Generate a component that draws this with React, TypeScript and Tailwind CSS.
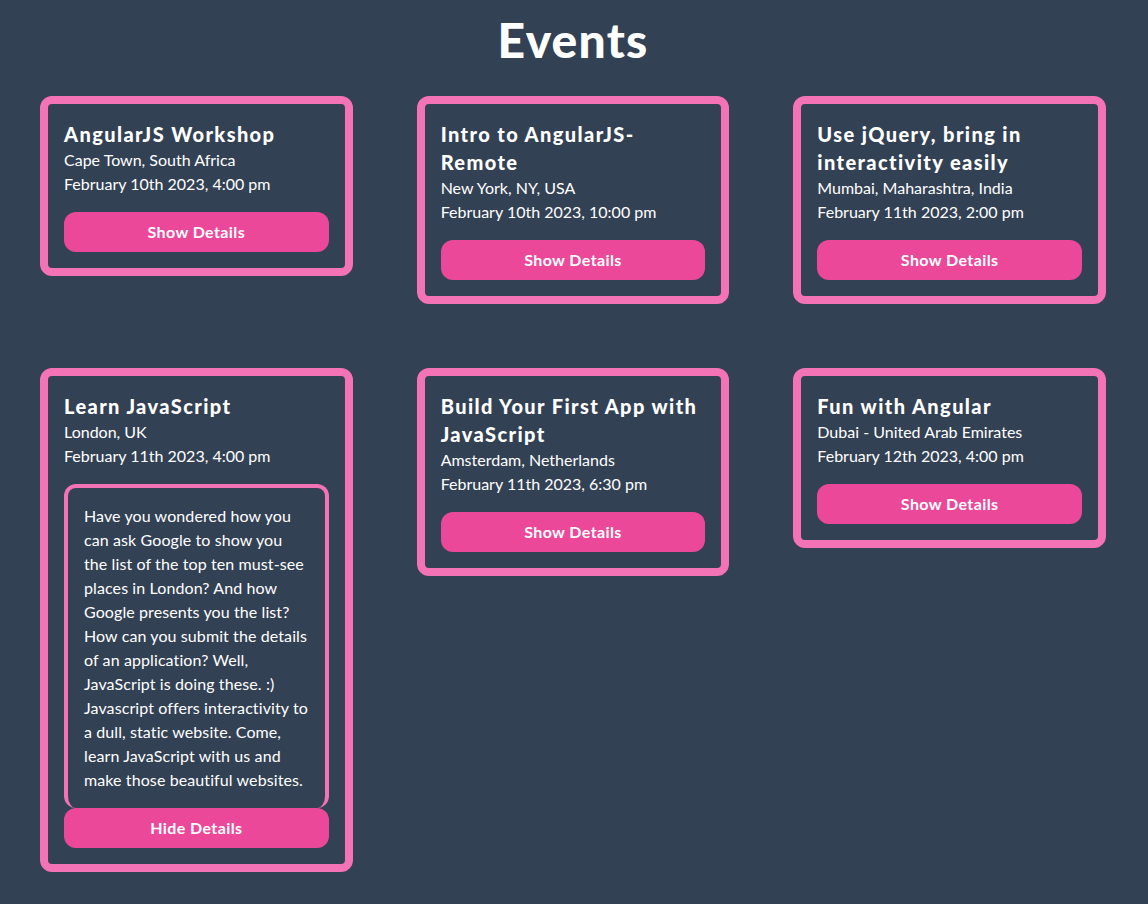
import React, { useState } from "react";

type EventItem = {
  id: number;
  title: string;
  location: string;
  date: string;
  details: string;
};

const events: EventItem[] = [
  {
    id: 1,
    title: "AngularJS Workshop",
    location: "Cape Town, South Africa",
    date: "February 10th 2023, 4:00 pm",
    details: "Join us for a hands-on AngularJS workshop.",
  },
  {
    id: 2,
    title: "Intro to AngularJS-Remote",
    location: "New York, NY, USA",
    date: "February 10th 2023, 10:00 pm",
    details: "A remote introduction to AngularJS.",
  },
  {
    id: 3,
    title: "Use jQuery, bring in interactivity easily",
    location: "Mumbai, Maharashtra, India",
    date: "February 11th 2023, 2:00 pm",
    details: "Learn how jQuery makes interactivity easy.",
  },
  {
    id: 4,
    title: "Learn JavaScript",
    location: "London, UK",
    date: "February 11th 2023, 4:00 pm",
    details:
      "Have you wondered how you can ask Google to show you the list of the top ten must-see places in London? And how Google presents you the list? How can you submit the details of an application? Well, JavaScript is doing these. :) Javascript offers interactivity to a dull, static website. Come, learn JavaScript with us and make those beautiful websites.",
  },
  {
    id: 5,
    title: "Build Your First App with JavaScript",
    location: "Amsterdam, Netherlands",
    date: "February 11th 2023, 6:30 pm",
    details: "Build your very first app with JavaScript.",
  },
  {
    id: 6,
    title: "Fun with Angular",
    location: "Dubai - United Arab Emirates",
    date: "February 12th 2023, 4:00 pm",
    details: "Have fun building things with Angular.",
  },
];

const EventCard = ({ event, initialOpen }: { event: EventItem; initialOpen?: boolean }) => {
  const [open, setOpen] = useState(!!initialOpen);
  return (
    <div className="border-8 border-[#f472b6] rounded-xl p-4">
      <h2 className="text-xl font-black tracking-[0.07em] text-white">{event.title}</h2>
      <p className="text-base text-white">{event.location}</p>
      <p className="text-base text-white">{event.date}</p>
      {open && (
        <div className="mt-4 border-4 border-b-0 border-[#f472b6] rounded-xl p-4 text-white tracking-[0.1px]">
          {event.details}
        </div>
      )}
      <button
        onClick={() => setOpen(!open)}
        className={`${open ? "" : "mt-4"} w-full py-2 rounded-xl bg-[#ec4899] text-white font-bold text-base tracking-wide`}
      >
        {open ? "Hide Details" : "Show Details"}
      </button>
    </div>
  );
};

export default function App() {
  return (
    <div
      className="min-h-screen bg-[#334155] pl-10 pr-[42px] pb-10"
      style={{ fontFamily: '"Segoe UI", Lato, sans-serif' }}
    >
      <h1 className="pt-4 mb-8 text-5xl font-black tracking-wide text-white text-center">Events</h1>
      <div className="grid grid-cols-3 gap-16 items-start">
        {events.map((e) => (
          <EventCard key={e.id} event={e} initialOpen={e.id === 4} />
        ))}
      </div>
    </div>
  );
}
